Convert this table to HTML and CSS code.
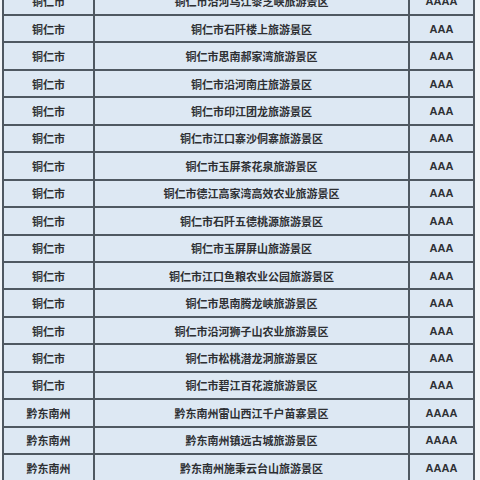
FILE: index.html
```html
<!DOCTYPE html>
<html lang="zh">
<head>
<meta charset="utf-8">
<link rel="stylesheet" href="styles.css">
</head>
<body>
<div class="page">
  <div class="table">
    <div class="cell">铜仁市</div><div class="cell">铜仁市沿河乌江黎芝峡旅游景区</div><div class="cell lvl">AAAA</div>
    <div class="cell">铜仁市</div><div class="cell">铜仁市石阡楼上旅游景区</div><div class="cell lvl">AAA</div>
    <div class="cell">铜仁市</div><div class="cell">铜仁市思南郝家湾旅游景区</div><div class="cell lvl">AAA</div>
    <div class="cell">铜仁市</div><div class="cell">铜仁市沿河南庄旅游景区</div><div class="cell lvl">AAA</div>
    <div class="cell">铜仁市</div><div class="cell">铜仁市印江团龙旅游景区</div><div class="cell lvl">AAA</div>
    <div class="cell">铜仁市</div><div class="cell">铜仁市江口寨沙侗寨旅游景区</div><div class="cell lvl">AAA</div>
    <div class="cell">铜仁市</div><div class="cell">铜仁市玉屏茶花泉旅游景区</div><div class="cell lvl">AAA</div>
    <div class="cell">铜仁市</div><div class="cell">铜仁市德江高家湾高效农业旅游景区</div><div class="cell lvl">AAA</div>
    <div class="cell">铜仁市</div><div class="cell">铜仁市石阡五德桃源旅游景区</div><div class="cell lvl">AAA</div>
    <div class="cell">铜仁市</div><div class="cell">铜仁市玉屏屏山旅游景区</div><div class="cell lvl">AAA</div>
    <div class="cell">铜仁市</div><div class="cell">铜仁市江口鱼粮农业公园旅游景区</div><div class="cell lvl">AAA</div>
    <div class="cell">铜仁市</div><div class="cell">铜仁市思南腾龙峡旅游景区</div><div class="cell lvl">AAA</div>
    <div class="cell">铜仁市</div><div class="cell">铜仁市沿河狮子山农业旅游景区</div><div class="cell lvl">AAA</div>
    <div class="cell">铜仁市</div><div class="cell">铜仁市松桃潜龙洞旅游景区</div><div class="cell lvl">AAA</div>
    <div class="cell">铜仁市</div><div class="cell">铜仁市碧江百花渡旅游景区</div><div class="cell lvl">AAA</div>
    <div class="cell">黔东南州</div><div class="cell">黔东南州雷山西江千户苗寨景区</div><div class="cell lvl">AAAA</div>
    <div class="cell">黔东南州</div><div class="cell">黔东南州镇远古城旅游景区</div><div class="cell lvl">AAAA</div>
    <div class="cell">黔东南州</div><div class="cell">黔东南州施秉云台山旅游景区</div><div class="cell lvl">AAAA</div>
  </div>
</div>
</body>
</html>
```

FILE: styles.css
```css
html, body {
  margin: 0;
  padding: 0;
  background: #f2f5f8;
}
.page {
  width: 480px;
  height: 480px;
  overflow: hidden;
}
.table {
  margin-top: -11.44px;
  margin-left: 2px;
  width: 473px;
  box-sizing: border-box;
  padding: 0 2px 2px 2px;
  background: #4f5861;
  display: grid;
  grid-template-columns: 89px 313px 63px;
  grid-auto-rows: 25.44px;
  gap: 2px;
}
.cell {
  background: #dde8f3;
  display: flex;
  align-items: center;
  justify-content: center;
  font-family: "Noto Sans CJK SC", "Liberation Sans", sans-serif;
  font-weight: 700;
  font-size: 11px;
  color: #2e3033;
  white-space: nowrap;
}
.lvl {
  font-family: "Liberation Sans", Arial, sans-serif;
}
```
